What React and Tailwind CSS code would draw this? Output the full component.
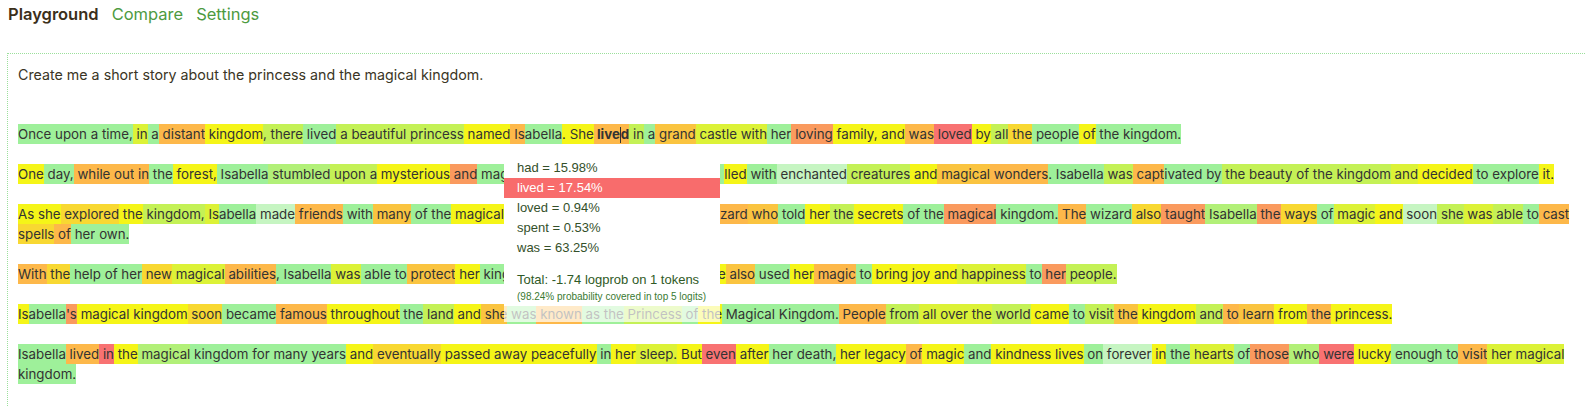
import React from "react";

const bg = {
  g: "bg-[#9ef09a]",
  l: "bg-[#c4f156]",
  y: "bg-[#f5f518]",
  o: "bg-[#fdb84a]",
  r: "bg-[#f87272]",
  yl: "bg-[#dcf237]",
  yo: "bg-[#f8d832]",
  oy: "bg-[#fac440]",
  or: "bg-[#fa9a5e]",
  gl: "bg-[#b2f078]",
  gw: "bg-[#c6f5c2]",
};

// "hide" marks the stretch that sits under the tooltip (216px wide)
const story = [
  [
    ["Once", "g"], [" upon", "g"], [" a", "g"], [" time", "g"], [",", "g"], [" in", "yl"], [" a", "g"],
    [" distant", "o"], [" kingdom", "y"], [",", "l"], [" there", "l"], [" lived", "g"], [" a", "l"],
    [" beautiful", "l"], [" princess", "l"], [" named", "y"], [" Is", "o"], ["abella", "g"], [".", "y"],
    [" She", "y"], [" lived", "o", "caret"], [" in", "l"], [" a", "g"], [" grand", "oy"], [" castle", "yl"],
    [" with", "yl"], [" her", "g"], [" loving", "or"], [" family", "y"], [",", "y"], [" and", "y"],
    [" was", "o"], [" loved", "r"], [" by", "y"], [" all", "l"], [" the", "yo"], [" people", "g"],
    [" of", "y"], [" the", "g"], [" kingdom", "g"], [".", "g"],
  ],
  [
    ["One", "y"], [" day", "g"], [",", "g"], [" while", "o"], [" out", "o"], [" in", "o"], [" the", "g"],
    [" forest", "y"], [",", "y"], [" Isabella", "g"], [" stumbled", "gl"], [" upon", "l"], [" a", "l"],
    [" mysterious", "y"], [" and", "or"], [" mag", "g"], ["ical garden. The garden was fi", "g", "hide"],
    ["lled", "y"], [" with", "g"], [" enchanted", "gw"], [" creatures", "l"], [" and", "y"],
    [" magical", "oy"], [" wonders", "o"], [".", "g"], [" Isabella", "g"], [" was", "l"], [" capt", "o"],
    ["ivated", "g"], [" by", "g"], [" the", "l"], [" beauty", "l"], [" of", "l"], [" the", "l"],
    [" kingdom", "l"], [" and", "yl"], [" decided", "y"], [" to", "g"], [" explore", "g"], [" it", "y"],
    [".", "y"],
  ],
  [
    ["As", "y"], [" she", "y"], [" explored", "yo"], [" the", "y"], [" kingdom", "l"], [",", "l"],
    [" Is", "yl"], ["abella", "g"], [" made", "gw"], [" friends", "o"], [" with", "g"], [" many", "oy"],
    [" of", "g"], [" the", "g"], [" magical", "y"], [" creatures, like a wise old wi", "g", "hide"],
    ["zard", "o"], [" who", "oy"], [" told", "g"], [" her", "y"], [" the", "l"], [" secrets", "y"],
    [" of", "g"], [" the", "g"], [" magical", "or"], [" kingdom", "g"], [".", "g"], [" The", "o"],
    [" wizard", "g"], [" also", "yo"], [" taught", "or"], [" Isabella", "gl"], [" the", "or"],
    [" ways", "yo"], [" of", "g"], [" magic", "yl"], [" and", "y"], [" soon", "gw"], [" she", "l"],
    [" was", "yl"], [" able", "l"], [" to", "g"], [" cast", "o"], [" spells", "yo"], [" of", "o"],
    [" her", "g"], [" own", "g"], [".", "g"],
  ],
  [
    ["With", "o"], [" the", "yo"], [" help", "g"], [" of", "g"], [" her", "g"], [" new", "yo"],
    [" magical", "yl"], [" abilities", "o"], [",", "g"], [" Isabella", "g"], [" was", "yl"],
    [" able", "g"], [" to", "g"], [" protect", "oy"], [" her", "y"], [" kin", "g"],
    ["gdom from dark forces. Sh", "g", "hide"], ["e", "y"], [" also", "oy"], [" used", "g"],
    [" her", "y"], [" magic", "o"], [" to", "g"], [" bring", "y"], [" joy", "y"], [" and", "y"],
    [" happiness", "yl"], [" to", "g"], [" her", "or"], [" people", "l"], [".", "l"],
  ],
  [
    ["Is", "y"], ["abella", "g"], ["'s", "or"], [" magical", "y"], [" kingdom", "y"], [" soon", "yo"],
    [" became", "g"], [" famous", "o"], [" throughout", "y"], [" the", "g"], [" land", "l"],
    [" and", "y"], [" she", "oy"], [" was", "g"], [" known", "o"], [" as", "g"], [" the", "g"],
    [" Princess", "l"], [" of", "g"], [" the", "y"], [" Magical", "g"], [" Kingdom", "g"], [".", "g"],
    [" People", "o"], [" from", "l"], [" all", "yl"], [" over", "yl"], [" the", "yl"], [" world", "l"],
    [" came", "y"], [" to", "g"], [" visit", "l"], [" the", "oy"], [" kingdom", "y"], [" and", "l"],
    [" to", "o"], [" learn", "oy"], [" from", "y"], [" the", "o"], [" princess", "y"], [".", "y"],
  ],
  [
    ["Isabella", "g"], [" lived", "o"], [" in", "r"], [" the", "y"], [" magical", "gl"],
    [" kingdom", "g"], [" for", "g"], [" many", "g"], [" years", "g"], [" and", "y"],
    [" eventually", "yo"], [" passed", "y"], [" away", "y"], [" peacefully", "y"], [" in", "g"],
    [" her", "y"], [" sleep", "yl"], [".", "yl"], [" But", "y"], [" even", "r"], [" after", "y"],
    [" her", "g"], [" death", "g"], [",", "g"], [" her", "y"], [" legacy", "y"], [" of", "o"],
    [" magic", "y"], [" and", "g"], [" kindness", "y"], [" lives", "y"], [" on", "g"],
    [" forever", "gw"], [" in", "y"], [" the", "g"], [" hearts", "yl"], [" of", "g"], [" those", "or"],
    [" who", "gl"], [" were", "r"], [" lucky", "y"], [" enough", "g"], [" to", "g"], [" visit", "o"],
    [" her", "yl"], [" magical", "yl"], [" kingdom", "g"], [".", "g"],
  ],
];

const options = [
  ["had", "15.98%"],
  ["lived", "17.54%"],
  ["loved", "0.94%"],
  ["spent", "0.53%"],
  ["was", "63.25%"],
];

const Token = ({ text, color, mark }) => {
  if (mark === "caret") {
    return (
      <span className={`${bg[color]} py-[2px] font-bold`}>
        {" live"}
        <span className="inline-block h-[16px] w-0 border-l border-[#333] align-[-4px]" />
        d
      </span>
    );
  }
  if (mark === "hide") {
    return (
      <span className={`${bg[color]} inline-block w-[216px] whitespace-nowrap`}>
        {text}
      </span>
    );
  }
  return <span className={`${bg[color]} py-[2px]`}>{text}</span>;
};

const Popup = () => (
  <div className="absolute left-[504px] top-[150px] w-[216px] font-['Liberation_Sans',Arial,sans-serif]">
    <div className="bg-white pt-2 pb-[2px] text-[13px] leading-5 text-[#34502a]">
      {options.map(([word, pct]) =>
        word === "lived" ? (
          <div key={word} className="bg-[#f86c6c] pl-[13px] text-white">
            {word} = {pct}
          </div>
        ) : (
          <div key={word} className="pl-[13px]">
            {word} = {pct}
          </div>
        )
      )}
      <div className="mt-3 pl-[13px] text-[#2f5a26]">
        Total: -1.74 logprob on 1 tokens
      </div>
      <div className="pl-[13px] text-[10px] leading-[14px] text-[#3a7a32]">
        (98.24% probability covered in top 5 logits)
      </div>
    </div>
    <div className="h-[16px] bg-white/70" />
  </div>
);

export default function App() {
  return (
    <div className="relative h-[407px] overflow-hidden bg-white font-['Inter',sans-serif]">
      {/* tabs */}
      <nav className="flex gap-[13px] pl-2 text-[16.5px] leading-[28px]">
        <span className="font-semibold text-[#3b2f1a]">Playground</span>
        <span className="text-[#4d9a3f]">Compare</span>
        <span className="text-[#4d9a3f]">Settings</span>
      </nav>

      <div className="ml-[7px] mt-[25px] border-l border-t border-dotted border-[#9be09b] pl-[10px] pr-2 pt-[11px] pb-10">
        <p className="text-[14.25px] leading-5 text-[#3a3525]">
          Create me a short story about the princess and the magical kingdom.
        </p>

        <div className="mt-[39px] flex flex-col gap-5 text-[13.3px] leading-5 text-[#333]">
          {story.map((para, i) => (
            <p key={i}>
              {para.map(([text, color, mark], j) => (
                <Token key={j} text={text} color={color} mark={mark} />
              ))}
            </p>
          ))}
        </div>
      </div>

      <Popup />
    </div>
  );
}
